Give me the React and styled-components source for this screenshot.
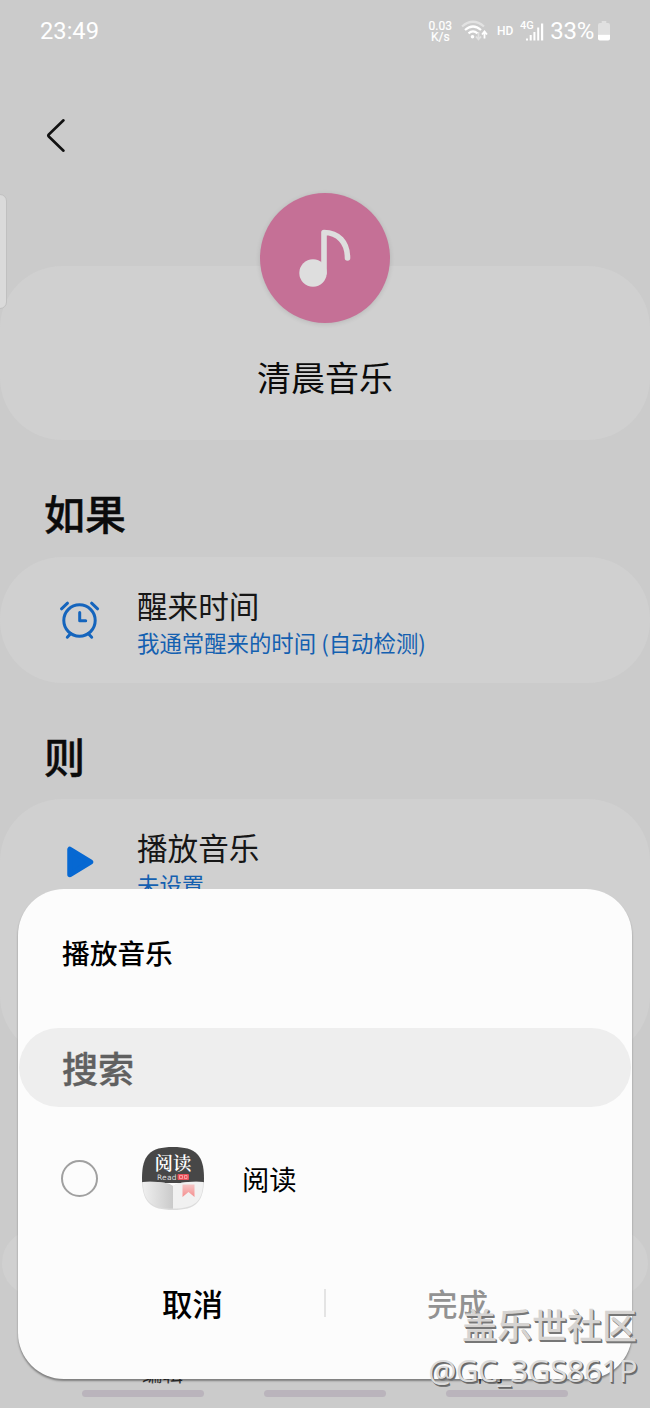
import React from "react";
import styled, { createGlobalStyle } from "styled-components";

const GlobalStyle = createGlobalStyle`
	* {
		box-sizing: border-box;
	}
	body {
		margin: 0;
		background: #cbcbcb;
		font-family: "Noto Sans CJK SC", "Noto Sans", sans-serif;
	}
	button {
		border: 0;
		padding: 0;
		background: none;
		font-family: inherit;
	}
`;

const Screen = styled.div`
	position: relative;
	width: 650px;
	height: 1408px;
	overflow: hidden;
	background: #cbcbcb;
	color: #0b0b0b;
`;

const StatusBar = styled.header`
	display: flex;
	justify-content: space-between;
	align-items: center;
	height: 62px;
	padding: 0 40px 0 40px;
	color: #fff;
	font-family: Roboto, sans-serif;
`;

const Clock = styled.div`
	font-size: 23.7px;
	line-height: 28px;
`;

const StatusIcons = styled.div`
	display: flex;
	align-items: center;
`;

const NetSpeed = styled.div`
	display: flex;
	flex-direction: column;
	align-items: center;
	margin-right: 9px;
	padding-top: 1px;
	font-size: 12px;
	font-weight: 400;
	line-height: 11px;
	-webkit-text-stroke: 0.2px #fff;
`;

const HdLabel = styled.span`
	margin: 0 7px 0 9px;
	font-size: 12px;
	font-weight: 500;
`;

const Percent = styled.span`
	margin: 0 4px 0 6px;
	font-size: 24px;
	line-height: 28px;
	letter-spacing: -0.3px;
`;

const NavBar = styled.nav`
	display: flex;
	align-items: center;
	height: 147px;
	padding-left: 44px;
`;

const EdgeHandle = styled.div`
	position: absolute;
	left: -8px;
	top: 194px;
	width: 15px;
	height: 115px;
	border: 1px solid #c0c0c0;
	border-radius: 7px;
	background: #dadada;
`;

const Card = styled.section`
	height: ${(props) => props.$height}px;
	border-radius: 62px;
	background: #d0d0d0;
`;

const HeroCard = styled(Card)`
	display: flex;
	flex-direction: column;
	align-items: center;
	margin-top: 57px;
`;

const HeroIcon = styled.div`
	width: 130px;
	height: 130px;
	flex: none;
	margin-top: -73px;
	border-radius: 50%;
	background: #c57096;
	box-shadow: 0 1px 5px rgba(0, 0, 0, 0.12);
`;

const HeroTitle = styled.h1`
	margin: 30px 0 0;
	font-size: 34px;
	font-weight: 400;
	line-height: 48px;
`;

const SectionTitle = styled.h2`
	height: ${(props) => props.$height}px;
	margin: 0;
	padding: 42px 0 0 44px;
	font-size: 41px;
	font-weight: 500;
	line-height: 60px;
	-webkit-text-stroke: 0.4px #0b0b0b;
`;

const Item = styled.div`
	display: flex;
	align-items: center;
	height: 125px;
	padding-left: 58px;
`;

const ItemIcon = styled.div`
	display: flex;
	width: 79px;
`;

const ItemText = styled.div`
	padding-top: 4px;
`;

const ItemTitle = styled.div`
	font-size: 30.6px;
	line-height: 40px;
	color: #161616;
`;

const ItemSub = styled.div`
	font-size: 22.4px;
	line-height: 34px;
	color: #1460b0;
`;

const PillCard = styled(Card)`
	margin: 172px 2px 0;
`;

const BottomTabs = styled.div`
	display: flex;
	justify-content: space-around;
	height: 34px;
	margin-top: 62px;
	font-size: 20.5px;
	line-height: 30px;
	color: #333;
`;

const GestureHints = styled.div`
	position: absolute;
	left: 82px;
	right: 82px;
	bottom: 11px;
	display: flex;
	justify-content: space-between;
`;

const Hint = styled.span`
	width: 122px;
	height: 7px;
	border-radius: 4px;
	background: #bab4bc;
`;

const Dialog = styled.div`
	position: absolute;
	left: 18px;
	top: 889px;
	width: 614px;
	height: 490px;
	border-radius: 46px;
	background: #fcfcfc;
	box-shadow: 0 2px 2px rgba(0, 0, 0, 0.38);
`;

const DialogTitle = styled.h3`
	height: 139px;
	margin: 0;
	padding: 42px 44px 0;
	font-size: 27.7px;
	font-weight: 500;
	line-height: 42px;
	color: #000;
`;

const SearchField = styled.div`
	height: 79px;
	margin: 0 1px;
	padding-left: 43px;
	border-radius: 40px;
	background: #eee;
	color: #606060;
	font-size: 36px;
	font-weight: 500;
	line-height: 78px;
	-webkit-text-stroke: 0.4px #606060;
`;

const Option = styled.label`
	display: flex;
	align-items: center;
	height: 143px;
	padding-left: 43px;
	font-size: 27.3px;
	color: #000;
`;

const Radio = styled.span`
	width: 37px;
	height: 37px;
	margin-right: 44px;
	border: 2px solid #a0a0a0;
	border-radius: 50%;
`;

const OptionLabel = styled.span`
	margin: 0 0 2px 38px;
	line-height: 40px;
`;

const Actions = styled.div`
	display: flex;
	align-items: center;
	height: 106px;
`;

const Action = styled.button`
	flex: 1;
	font-size: 30.5px;
	font-weight: 500;
	line-height: 44px;
	text-align: center;
	padding: ${(props) => (props.$last ? "0 43px 0 0" : "0 0 0 43px")};
	color: ${(props) => (props.disabled ? "#929292" : "#000")};
`;

const Divider = styled.span`
	width: 2px;
	height: 28px;
	background: #e4e4e4;
`;

const Watermark = styled.div`
	position: absolute;
	right: 13px;
	top: 1302px;
	text-align: right;
	white-space: nowrap;
`;

const WatermarkSite = styled.div`
	font-size: 35px;
	font-weight: 500;
	line-height: 44px;
	color: #d6d4d2;
	text-shadow: 1px 1px 0 #777, 1.5px 2px 0 #777;
`;

const WatermarkUser = styled.div`
	font-family: "Open Sans", "Noto Sans", sans-serif;
	font-size: 31.5px;
	letter-spacing: -0.65px;
	line-height: 47px;
	color: #dcdcdc;
	text-shadow: 1px 1px 0 #666, 1.5px 1.5px 0 #777;
`;

const WifiIcon = () => (
	<svg width="27" height="22" viewBox="0 0 27 22" fill="none">
		<path d="M1 6.5Q12 -3 23 6.5" stroke="#fff" strokeOpacity=".45" strokeWidth="2.2" />
		<path d="M4 10Q12 3 20 10" stroke="#fff" strokeWidth="2.2" />
		<path d="M7.5 13.3Q12 9.5 16.5 13.3" stroke="#fff" strokeWidth="2.2" />
		<circle cx="11.5" cy="16.7" r="1.8" fill="#fff" />
		<path d="M17.5 12v7M15 16.5l2.5 3 2.5-3" stroke="#fff" strokeOpacity=".45" strokeWidth="1.7" />
		<path d="M23.5 18.5v-6M21 14.5l2.5-3 2.5 3" stroke="#fff" strokeWidth="1.8" />
	</svg>
);

const SignalIcon = () => (
	<svg width="24" height="22" viewBox="0 0 24 22" fill="#fff">
		<text x="0" y="8.500" fontSize="11" fontWeight="500" fontFamily="Roboto">
			4G
		</text>
		<path d="M6 18.500h2v2h-2zM9.700 15h2v5.500h-2zM13.400 12h2v8.500h-2zM17.200 7.500h2v13h-2zM21 3.500h2.200v17h-2.200z" />
	</svg>
);

const BatteryIcon = () => (
	<svg width="12" height="20" viewBox="0 0 13 20" fill="#fff" preserveAspectRatio="none">
		<path d="M4 0h5v2h2q2 0 2 2v9H0V4q0-2 2-2h2z" fillOpacity=".4" />
		<path d="M0 13.500h13v4q0 2-2 2H2q-2 0-2-2z" />
	</svg>
);

const BackIcon = () => (
	<svg width="24" height="36" viewBox="0 0 24 36" fill="none">
		<path
			d="M19.500 2.300L4.800 16.500q-1 1 0 2L19.500 32.700"
			stroke="#111"
			strokeWidth="2.6"
			strokeLinecap="round"
		/>
	</svg>
);

const NoteIcon = () => (
	<svg width="130" height="130" viewBox="0 0 130 130">
		<circle cx="53" cy="80" r="13.7" fill="#dedede" />
		<path
			d="M64 80V39.500C78 39.500 87.500 49 87.500 65"
			fill="none"
			stroke="#dedede"
			strokeWidth="5.6"
			strokeLinecap="round"
			strokeLinejoin="round"
		/>
	</svg>
);

const AlarmIcon = () => (
	<svg
		width="44"
		height="44"
		viewBox="0 0 44 44"
		fill="none"
		stroke="#1565bd"
		strokeWidth="3"
		strokeLinecap="round"
		strokeLinejoin="round"
	>
		<circle cx="21.5" cy="22.5" r="15.7" />
		<path d="M21.700 14.500v8.200h6M3.500 10.800l6-5.600M39.600 10.800l-6-5.600M12.800 35.500l-3.500 3.700M30.200 35.500l3.500 3.700" />
	</svg>
);

const PlayIcon = () => (
	<svg width="44" height="44" viewBox="0 0 44 44">
		<path
			d="M12 9.500v25L32.500 22z"
			fill="#0668d2"
			stroke="#0668d2"
			strokeWidth="5.5"
			strokeLinejoin="round"
		/>
	</svg>
);

const ReadIcon = () => (
	<svg width="62" height="63" viewBox="0 0 62 63">
		<defs>
			<clipPath id="squircle">
				<path d="M31 0C54 0 62 8 62 31.500S54 63 31 63 0 55 0 31.500 8 0 31 0z" />
			</clipPath>
			<linearGradient id="page">
				<stop offset="0" stopColor="#efefef" />
				<stop offset="1" stopColor="#cacaca" />
			</linearGradient>
			<linearGradient id="mark" x2="0" y2="1">
				<stop offset="0" stopColor="#f5c5c5" />
				<stop offset="1" stopColor="#f58f8f" />
			</linearGradient>
		</defs>
		<g clipPath="url(#squircle)">
			<path d="M0 0h62v36H0z" fill="#474747" />
			<path d="M0 35Q24 34 31 39Q38 34 62 35V63H0z" fill="#dcdcdc" />
			<path d="M1 35Q24 34 31 39V61.500C9 61.500 1 54 1 35z" fill="url(#page)" />
			<path d="M61 35Q38 34 31 39V61.500C53 61.500 61 54 61 35z" fill="#f1f1f1" />
			<path d="M40.500 37.500h12V50l-6-5-6 5z" fill="url(#mark)" />
		</g>
		<text x="31" y="23" textAnchor="middle" fill="#fff" fontSize="18.500" fontWeight="600" fontFamily="Noto Serif CJK SC, Noto Sans CJK SC, serif">
			阅读
		</text>
		<text x="15" y="33" fill="#ddd" fontSize="7.500" letterSpacing=".2" fontFamily="DejaVu Sans">
			Read
		</text>
		<rect x="35.500" y="27" width="11.500" height="6" rx="1" fill="#e8505a" />
		<path d="M37.500 28.500h3v3h-3zM42.500 28.500h2.500v3h-2.500z" fill="none" stroke="#fbb" strokeWidth=".7" />
	</svg>
);

const ConditionItem = ({ icon, title, sub }) => (
	<Item>
		<ItemIcon>{icon}</ItemIcon>
		<ItemText>
			<ItemTitle>{title}</ItemTitle>
			<ItemSub>{sub}</ItemSub>
		</ItemText>
	</Item>
);

const PlayMusicDialog = () => (
	<Dialog role="dialog">
		<DialogTitle>播放音乐</DialogTitle>
		<SearchField>搜索</SearchField>
		<Option>
			<Radio />
			<ReadIcon />
			<OptionLabel>阅读</OptionLabel>
		</Option>
		<Actions>
			<Action>取消</Action>
			<Divider />
			<Action $last disabled>
				完成
			</Action>
		</Actions>
	</Dialog>
);

const App = () => (
	<>
		<GlobalStyle />
		<Screen>
			<StatusBar>
				<Clock>23:49</Clock>
				<StatusIcons>
					<NetSpeed>
						<span>0.03</span>
						<span>K/s</span>
					</NetSpeed>
					<WifiIcon />
					<HdLabel>HD</HdLabel>
					<SignalIcon />
					<Percent>33%</Percent>
					<BatteryIcon />
				</StatusIcons>
			</StatusBar>
			<NavBar>
				<BackIcon />
			</NavBar>
			<EdgeHandle />
			<HeroCard $height={174}>
				<HeroIcon>
					<NoteIcon />
				</HeroIcon>
				<HeroTitle>清晨音乐</HeroTitle>
			</HeroCard>
			<SectionTitle $height={117}>如果</SectionTitle>
			<Card $height={126}>
				<ConditionItem
					icon={<AlarmIcon />}
					title="醒来时间"
					sub="我通常醒来的时间 (自动检测)"
				/>
			</Card>
			<SectionTitle $height={116}>则</SectionTitle>
			<Card $height={259}>
				<ConditionItem
					icon={<PlayIcon />}
					title="播放音乐"
					sub="未设置"
				/>
			</Card>
			<PillCard $height={66} />
			<BottomTabs>
				<span>编辑</span>
				<span>保存</span>
			</BottomTabs>
			<GestureHints>
				<Hint />
				<Hint />
				<Hint />
			</GestureHints>
			<PlayMusicDialog />
			<Watermark>
				<WatermarkSite>盖乐世社区</WatermarkSite>
				<WatermarkUser>@GC_3GS861P</WatermarkUser>
			</Watermark>
		</Screen>
	</>
);

export default App;
